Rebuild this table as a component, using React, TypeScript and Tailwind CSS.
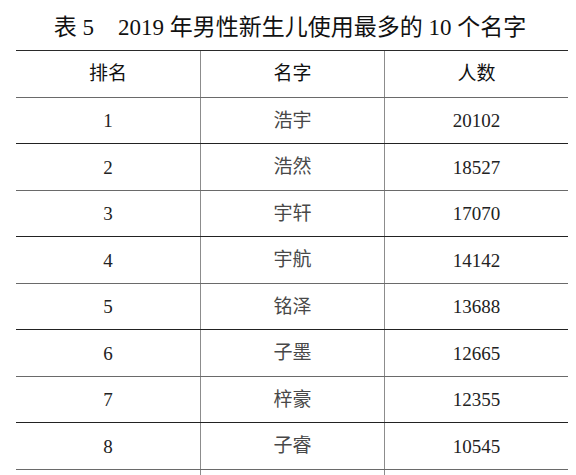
import React from "react";

const rows: [string, string, string][] = [
  ["1", "浩宇", "20102"],
  ["2", "浩然", "18527"],
  ["3", "宇轩", "17070"],
  ["4", "宇航", "14142"],
  ["5", "铭泽", "13688"],
  ["6", "子墨", "12665"],
  ["7", "梓豪", "12355"],
  ["8", "子睿", "10545"],
];

const font = { fontFamily: '"Liberation Serif", "Noto Sans CJK SC", serif' };

export default function App() {
  return (
    <div
      className="w-[576px] h-[475px] overflow-hidden bg-white text-[#1a1a1a]"
      style={font}
    >
      <div className="h-[50px] flex items-center justify-center pt-[4px] pl-[4px] text-[23px] leading-none text-[#111] whitespace-pre">
        <span>表 5</span>
        <span className="w-[24px]" />
        <span>2019 年男性新生儿使用最多的 10 个名字</span>
      </div>
      <div className="mx-[16px] w-[552px] border-t border-[#2a2a2a]">
        <div className="grid grid-cols-3 h-[46.5px] border-b border-[#6a6a6a] text-[19px] text-[#111]">
          <div className="flex items-center justify-center pt-[1px]">排名</div>
          <div className="flex items-center justify-center pt-[1px] border-l border-[#8c8c8c]">名字</div>
          <div className="flex items-center justify-center pt-[1px] border-l border-[#8c8c8c]">人数</div>
        </div>
        {rows.map(([rank, name, count], i) => (
          <div
            key={rank}
            className={
              "grid grid-cols-3 h-[46.5px] border-b text-[19px] " +
              (i % 2 === 0 ? "border-[#222]" : "border-[#6a6a6a]")
            }
          >
            <div className="flex items-center justify-center pt-[2px] text-[#222]">{rank}</div>
            <div className="flex items-center justify-center pt-[1px] border-l border-[#8c8c8c] text-[#484848]">
              {name}
            </div>
            <div className="flex items-center justify-center pt-[2px] border-l border-[#8c8c8c] text-[#222]">
              {count}
            </div>
          </div>
        ))}
        <div className="grid grid-cols-3 h-[46.5px]">
          <div />
          <div className="border-l border-[#8c8c8c]" />
          <div className="border-l border-[#8c8c8c]" />
        </div>
      </div>
    </div>
  );
}
